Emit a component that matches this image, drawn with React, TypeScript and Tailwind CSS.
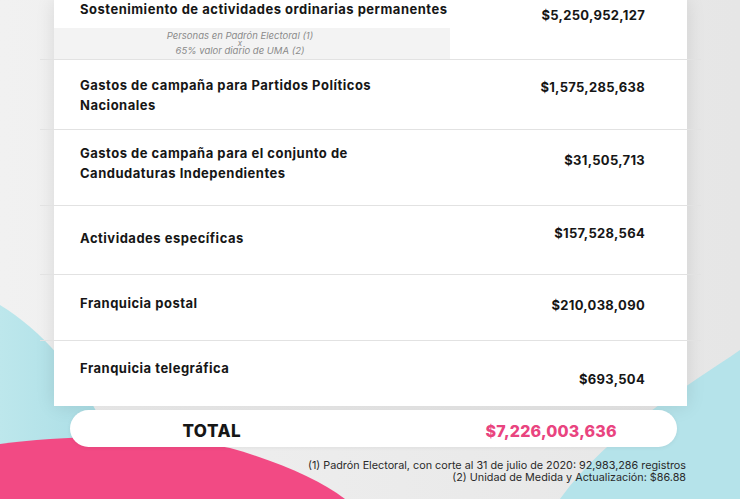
import React from "react";

const font = { fontFamily: "Inter, 'Noto Sans', sans-serif" };

function Sep() {
  return <div className="h-px bg-[#e2e2e2] -mx-[14px]" />;
}

export default function App() {
  return (
    <div
      className="relative w-[740px] h-[499px] overflow-hidden bg-gradient-to-r from-[#f1f1f1] to-[#e6e6e6] text-[#161616]"
      style={font}
    >
      <svg className="absolute inset-0" width="740" height="499" viewBox="0 0 740 499">
        <defs>
          <linearGradient id="tl" x1="0" y1="0" x2="1" y2="0">
            <stop offset="0" stopColor="#bde7ec" />
            <stop offset="1" stopColor="#a9dde5" />
          </linearGradient>
        </defs>
        <path d="M0 305 C 40 330, 80 370, 110 440 L 0 460 Z" fill="url(#tl)" />
        <path d="M740 350 C 690 385, 610 430, 560 499 L 740 499 Z" fill="#b5e3ea" />
        <path d="M0 444 C 60 436, 150 432, 230 448 C 280 462, 320 480, 345 499 L 0 499 Z" fill="#f24a84" />
      </svg>

      <div className="relative flex flex-col">
        <div className="ml-[54px] w-[633px] bg-white shadow-[0_0_18px_rgba(0,0,0,0.10)] tracking-[0.5px]">
          {/* Row 1 */}
          <div className="relative h-[59px]">
            <div className="flex justify-between pl-[26px] pr-[42px] pt-[1px]">
              <span className="text-[13px] font-bold leading-[16px]">
                Sostenimiento de actividades ordinarias permanentes
              </span>
              <span className="text-[13px] font-bold leading-[16px] pt-[6px] tracking-[0.3px]">$5,250,952,127</span>
            </div>
            <div className="absolute left-0 top-[28px] w-[396px] h-[31px] bg-[#f3f3f3] flex flex-col items-center justify-center pr-[24px] text-[9.5px] italic leading-[8px] tracking-normal text-[#8a8a8a]">
              <span>Personas en Padrón Electoral (1)</span>
              <span className="text-[8px] leading-[7px]">x</span>
              <span>65% valor diario de UMA (2)</span>
            </div>
          </div>
          <Sep />
          {/* Row 2 */}
          <div className="h-[69px] flex justify-between pl-[26px] pr-[42px] pt-[15px]">
            <span className="text-[13px] font-bold leading-[20px]">
              Gastos de campaña para Partidos Políticos
              <br />
              Nacionales
            </span>
            <span className="text-[13px] font-bold leading-[20px] pt-[2px] tracking-[0.3px]">$1,575,285,638</span>
          </div>
          <Sep />
          {/* Row 3 */}
          <div className="h-[75px] flex justify-between pl-[26px] pr-[42px] pt-[13px]">
            <span className="text-[13px] font-bold leading-[20px]">
              Gastos de campaña para el conjunto de
              <br />
              Candudaturas Independientes
            </span>
            <span className="text-[13px] font-bold leading-[20px] pt-[7px] tracking-[0.3px]">$31,505,713</span>
          </div>
          <Sep />
          {/* Row 4 */}
          <div className="h-[68px] flex justify-between pl-[26px] pr-[42px] pt-[17px]">
            <span className="text-[13px] font-bold leading-[20px] pt-[5px]">Actividades específicas</span>
            <span className="text-[13px] font-bold leading-[20px] tracking-[0.3px]">$157,528,564</span>
          </div>
          <Sep />
          {/* Row 5 */}
          <div className="h-[65px] flex justify-between pl-[26px] pr-[42px] pt-[18px]">
            <span className="text-[13px] font-bold leading-[20px]">Franquicia postal</span>
            <span className="text-[13px] font-bold leading-[20px] pt-[2px] tracking-[0.3px]">$210,038,090</span>
          </div>
          <Sep />
          {/* Row 6 */}
          <div className="h-[65px] flex justify-between pl-[26px] pr-[42px] pt-[17px]">
            <span className="text-[13px] font-bold leading-[20px]">Franquicia telegráfica</span>
            <span className="text-[13px] font-bold leading-[20px] pt-[11px] tracking-[0.3px]">$693,504</span>
          </div>
        </div>

        {/* Total pill */}
        <div className="ml-[70px] mt-[4px] w-[607px] h-[37px] rounded-full bg-white shadow-[0_1px_4px_rgba(0,0,0,0.06)] grid grid-cols-2 items-center pt-[5px]">
          <span className="text-center pr-[20px] text-[17px] font-extrabold tracking-[0.5px] leading-[20px]">TOTAL</span>
          <span className="text-center pl-[52px] text-[16px] font-extrabold text-[#e9447f] leading-[20px] tracking-[0.2px]">$7,226,003,636</span>
        </div>

        {/* Footnotes */}
        <div className="mt-[13px] mr-[54px] flex flex-col items-end text-[10.8px] leading-[12px] text-[#2a2a2a]">
          <span>(1) Padrón Electoral, con corte al 31 de julio de 2020: 92,983,286 registros</span>
          <span>(2) Unidad de Medida y Actualización: $86.88</span>
        </div>
      </div>
    </div>
  );
}
